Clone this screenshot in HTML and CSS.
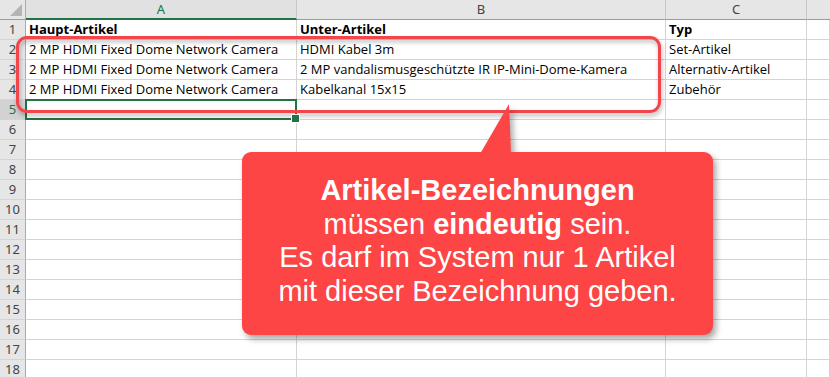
FILE: index.html
```html
<!DOCTYPE html>
<html lang="de">
<head>
    <meta charset="UTF-8">
    <title>Artikel</title>
    <link rel="stylesheet" href="styles.css">
</head>
<body>
    <div id="sheet">
        <div class="row head">
            <div class="rh corner"><span class="tri"></span></div>
            <div class="ch col-a sel">A</div>
            <div class="ch col-b">B</div>
            <div class="ch col-c">C</div>
            <div class="ch col-d"></div>
        </div>
        <div class="row">
            <div class="rh">1</div>
            <div class="c col-a b">Haupt-Artikel</div>
            <div class="c col-b b">Unter-Artikel</div>
            <div class="c col-c b">Typ</div>
            <div class="c col-d"></div>
        </div>
        <div class="row">
            <div class="rh">2</div>
            <div class="c col-a">2 MP HDMI Fixed Dome Network Camera</div>
            <div class="c col-b">HDMI Kabel 3m</div>
            <div class="c col-c">Set-Artikel</div>
            <div class="c col-d"></div>
        </div>
        <div class="row">
            <div class="rh">3</div>
            <div class="c col-a">2 MP HDMI Fixed Dome Network Camera</div>
            <div class="c col-b">2 MP vandalismusgeschützte IR IP-Mini-Dome-Kamera</div>
            <div class="c col-c">Alternativ-Artikel</div>
            <div class="c col-d"></div>
        </div>
        <div class="row">
            <div class="rh">4</div>
            <div class="c col-a">2 MP HDMI Fixed Dome Network Camera</div>
            <div class="c col-b">Kabelkanal 15x15</div>
            <div class="c col-c">Zubehör</div>
            <div class="c col-d"></div>
        </div>
        <div class="row">
            <div class="rh sel">5</div>
            <div class="c col-a active"></div>
            <div class="c col-b"></div>
            <div class="c col-c"></div>
            <div class="c col-d"></div>
        </div>
        <div id="empty-rows"></div>

        <div class="mark"></div>
        <div class="callout">
            <b>Artikel-Bezeichnungen</b><br>
            müssen <b>eindeutig</b> sein.<br>
            Es darf im System nur 1 Artikel<br>
            mit dieser Bezeichnung geben.
        </div>
    </div>
    <script>
        var oRows = document.getElementById("empty-rows");
        for(var i = 6; i <= 18; i++){
            var row = document.createElement("div");
            row.className = "row";
            row.innerHTML = '<div class="rh">' + i + '</div>' +
                '<div class="c col-a"></div><div class="c col-b"></div>' +
                '<div class="c col-c"></div><div class="c col-d"></div>';
            oRows.appendChild(row);
        }
    </script>
</body>
</html>
```

FILE: styles.css
```css
*{
    margin: 0;
    padding: 0;
    box-sizing: border-box;
}
body{
    background: #fff;
    overflow: hidden;
    font-family: "Open Sans", "Liberation Sans", sans-serif;
}
#sheet{
    position: relative;
    width: 830px;
    height: 377px;
    overflow: hidden;
}
.row{
    display: flex;
    height: 20px;
}
.rh{
    width: 26px;
    flex: none;
    background: #e6e6e6;
    border-right: 1px solid #ababab;
    border-bottom: 1px solid #d4d4d4;
    color: #444;
    font-family: "Noto Sans", "Liberation Sans", sans-serif;
    font-size: 13px;
    line-height: 19px;
    text-align: center;
}
.rh.sel{
    background: #d2d2d2;
    color: #217346;
}
.corner{
    position: relative;
    border-bottom: 1px solid #9b9b9b;
}
.corner .tri{
    position: absolute;
    right: 3px;
    bottom: 3px;
    width: 12px;
    height: 12px;
    background: #b4b4b4;
    clip-path: polygon(100% 0, 100% 100%, 0 100%);
}
.col-a{ width: 271px; }
.col-b{ width: 369px; }
.col-c{ width: 141px; }
.col-d{ flex: 1; }
.ch{
    flex: none;
    background: #e6e6e6;
    border-right: 1px solid #c8c8c8;
    border-bottom: 1px solid #9b9b9b;
    color: #444;
    font-family: "Noto Sans", "Liberation Sans", sans-serif;
    font-size: 13px;
    line-height: 19px;
    text-align: center;
}
.ch.col-d{
    flex: 1;
    border-right: none;
}
.ch.sel{
    background: #e1e1e1;
    color: #217346;
    border-bottom: 2px solid #217346;
}
.c{
    flex: none;
    border-right: 1px solid #d4d4d4;
    border-bottom: 1px solid #d4d4d4;
    padding-left: 3px;
    font-size: 13px;
    line-height: 19px;
    color: #000;
    white-space: nowrap;
}
.c.col-d{
    flex: 1;
}
.c.b{
    font-weight: bold;
}
.c.active{
    position: relative;
}
.c.active::after{
    content: "";
    position: absolute;
    left: -1px;
    top: -1px;
    right: -1px;
    bottom: -1px;
    border: 2px solid #217346;
}
.c.active::before{
    content: "";
    position: absolute;
    right: -4px;
    bottom: -4px;
    width: 7px;
    height: 7px;
    background: #217346;
    border: 1px solid #fff;
    z-index: 1;
}
/* roter Rahmen um die Zeilen */
.mark{
    position: absolute;
    left: 16px;
    top: 36px;
    width: 645px;
    height: 77px;
    border: 3px solid #f4454a;
    border-radius: 11px;
    filter: drop-shadow(1px 3px 2px rgba(0,0,0,.3));
}
.callout{
    position: absolute;
    left: 242px;
    top: 152px;
    width: 471px;
    height: 183px;
    padding-top: 22px;
    background: #fe4545;
    border-radius: 9px;
    color: #fff;
    font-family: "Liberation Sans", Arial, sans-serif;
    font-size: 29px;
    line-height: 33.5px;
    text-align: center;
    filter: drop-shadow(3px 4px 3px rgba(0,0,0,.35));
}
.callout::before{
    content: "";
    position: absolute;
    left: 238px;
    top: -48px;
    width: 31px;
    height: 50px;
    background: #fe4545;
    clip-path: polygon(29px 0, 0 100%, 100% 100%);
}
```
